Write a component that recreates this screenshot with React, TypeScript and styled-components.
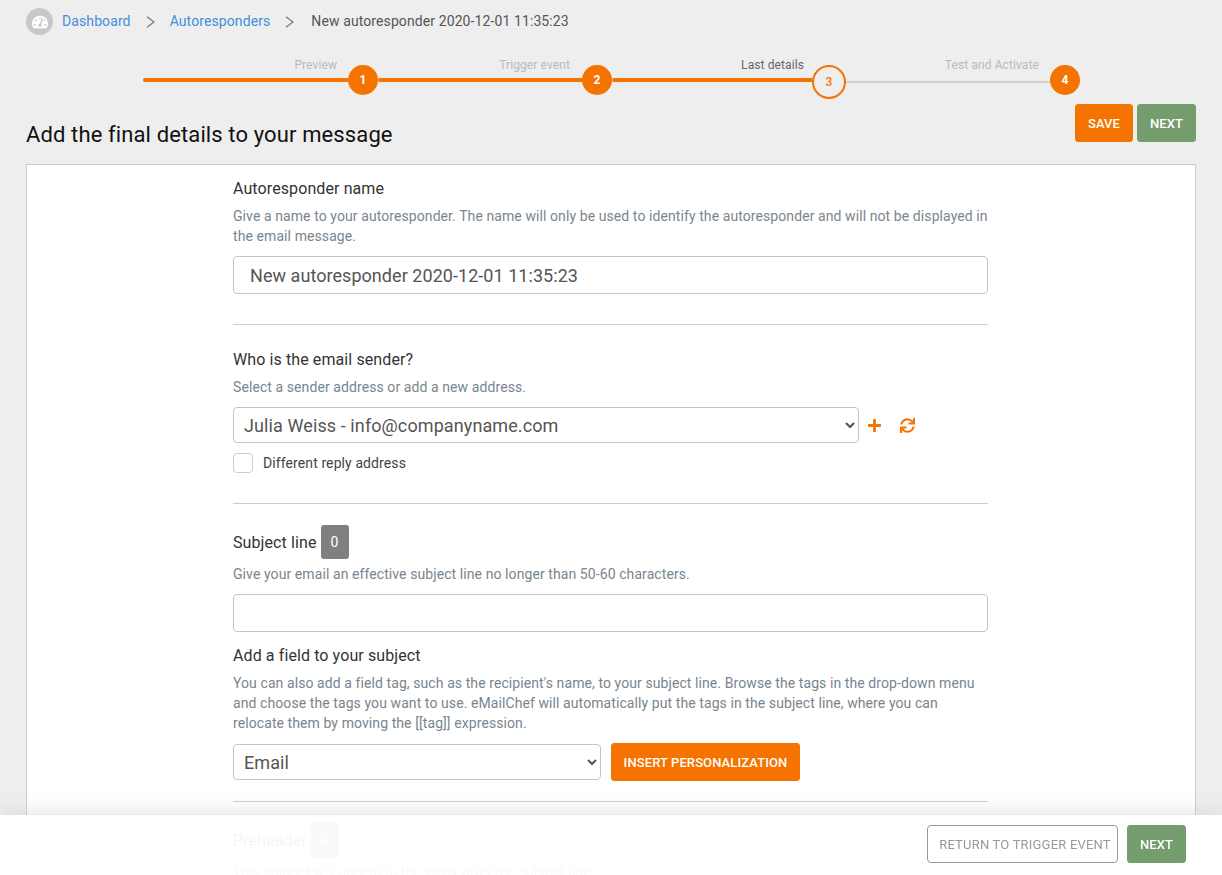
import React from 'react';
import styled, { createGlobalStyle } from 'styled-components';
import { FaPlus, FaSync, FaTachometerAlt } from 'react-icons/fa';

const ORANGE = '#f57300';
const GREEN = '#759c6c';

const GlobalStyle = createGlobalStyle`
  html, body {
    margin: 0;
    height: 100%;
    overflow: hidden;
    background: #eeeeee;
    font-family: Roboto, "Liberation Sans", sans-serif;
    letter-spacing: 0.1px;
  }
  * { box-sizing: border-box; }
`;

const Page = styled.div`
  padding: 8px 26px 0;
`;

const Breadcrumb = styled.nav`
  display: flex;
  align-items: center;
  height: 27px;
  font-size: 14px;
  line-height: 25px;
`;

const HomeIcon = styled.span`
  width: 27px;
  height: 27px;
  border-radius: 50%;
  background: #c8c8c8;
  color: #fff;
  display: flex;
  align-items: center;
  justify-content: center;
  font-size: 16px;
  margin-right: 9px;
`;

const Crumb = styled.a`
  color: #3f8fdc;
  padding-bottom: 1px;
`;

const CrumbCurrent = styled.span`
  color: #555;
  padding-bottom: 1px;
  margin-left: 2px;
`;

const CrumbSep = styled.svg`
  width: 9px;
  height: 12px;
  margin: 0 15px;
  fill: none;
  stroke: #777;
  stroke-width: 1.2;
`;

const Stepper = styled.div`
  display: grid;
  grid-template-columns: 235px repeat(3, 234px);
  margin: 21px 0 0 117px;
  height: 49px;
`;

const Step = styled.div`
  display: flex;
  flex-direction: column;
`;

const StepLabel = styled.div<{ $active?: boolean; $right: number }>`
  height: 14px;
  margin-top: 2px;
  padding-right: ${p => p.$right}px;
  text-align: right;
  font-size: 12px;
  line-height: 14px;
  color: ${p => (p.$active ? '#666' : '#b4bbbf')};
`;

const StepTrack = styled.div`
  display: flex;
  align-items: flex-start;
  margin-top: -7px;
`;

const StepLine = styled.div<{ $done: boolean }>`
  flex: 1;
  height: ${p => (p.$done ? 4 : 2)}px;
  margin-top: ${p => (p.$done ? 13 : 16)}px;
  background: ${p => (p.$done ? ORANGE : '#cfcfcf')};
  border-radius: 2px 0 0 2px;
`;

const StepDot = styled.div<{ $current?: boolean }>`
  width: ${p => (p.$current ? 34 : 30)}px;
  height: ${p => (p.$current ? 34 : 30)}px;
  border-radius: 50%;
  display: flex;
  align-items: center;
  justify-content: center;
  font-size: 12px;
  font-weight: ${p => (p.$current ? 500 : 700)};
  color: ${p => (p.$current ? ORANGE : '#fff')};
  background: ${p => (p.$current ? 'transparent' : ORANGE)};
  border: ${p => (p.$current ? `2px solid ${ORANGE}` : 'none')};
`;

const TitleRow = styled.div`
  display: flex;
  justify-content: space-between;
  align-items: flex-start;
  height: 60px;
  margin-top: -1px;
`;

const Title = styled.h1`
  margin: 15px 0 0;
  font-size: 22px;
  line-height: 31px;
  font-weight: 400;
  letter-spacing: 0.12px;
  color: #111;
`;

const Actions = styled.div`
  display: flex;
  gap: 4px;
`;

const Button = styled.button<{ $color: string; $width: number }>`
  width: ${p => p.$width}px;
  height: 38px;
  background: ${p => p.$color};
  border: 1px solid ${p => p.$color};
  border-radius: 3px;
  color: #fff;
  font-family: inherit;
  font-size: 13px;
  font-weight: 500;
  letter-spacing: inherit;
  text-transform: uppercase;
  padding: 0;
`;

const OutlineButton = styled(Button)`
  background: #fff;
  border-color: #999;
  border-radius: 4px;
  color: #999;
  font-weight: 400;
  letter-spacing: 0.2px;
  padding-left: 5px;
`;

const Card = styled.main`
  background: #fff;
  border: 1px solid #ccc;
  padding: 0 0 0 206px;
  height: 760px;
`;

const Form = styled.div`
  width: 755px;
`;

const Section = styled.section<{ $pad: number }>`
  padding-top: ${p => p.$pad}px;
`;

const Label = styled.div`
  font-size: 16px;
  line-height: 24px;
  color: #333;
`;

const CountedLabel = styled(Label)`
  padding-top: 1px;
`;

const AddFieldLabel = styled(Label)`
  margin-top: 12px;
`;

const Help = styled.p`
  margin: 5px 0 10px;
  font-size: 14px;
  line-height: 20px;
  letter-spacing: 0.085px;
  color: #78858f;
`;

const TextInput = styled.input`
  display: block;
  width: 100%;
  height: 38px;
  border: 1px solid #c4c4c4;
  border-radius: 4px;
  padding: 0 16px;
  font-family: inherit;
  font-size: 18px;
  letter-spacing: 0.05px;
  color: #555;
  background: #fff;
`;

const Select = styled.select<{ $width: number }>`
  width: ${p => p.$width}px;
  height: 36px;
  border: 1px solid #c4c4c4;
  border-radius: 4px;
  padding: 0 6px;
  font-family: inherit;
  font-size: 18px;
  letter-spacing: inherit;
  color: #555;
  background: #fff;
`;

const Divider = styled.hr<{ $top: number }>`
  border: 0;
  border-top: 1px solid #ccc;
  margin: ${p => p.$top}px 0 0;
`;

const SenderRow = styled.div`
  display: flex;
  align-items: center;
`;

const IconAction = styled.span<{ $left: number }>`
  display: flex;
  color: ${ORANGE};
  font-size: 15px;
  margin-left: ${p => p.$left}px;
`;

const CheckRow = styled.label`
  display: flex;
  align-items: center;
  gap: 10px;
  margin-top: 10px;
  font-size: 14px;
  color: #444;
`;

const CheckBox = styled.span`
  width: 20px;
  height: 20px;
  border: 1px solid #ccc;
  border-radius: 4px;
  background: #fff;
`;

const LabelRow = styled.div`
  display: flex;
  align-items: center;
  gap: 4px;
`;

const Counter = styled.span`
  width: 28px;
  height: 34px;
  border-radius: 3px;
  background: #808080;
  color: #fff;
  font-size: 14px;
  display: flex;
  align-items: center;
  justify-content: center;
`;

const FieldRow = styled.div`
  display: flex;
  align-items: center;
  gap: 10px;
`;

const Footer = styled.footer`
  position: fixed;
  left: 0;
  right: 0;
  bottom: 0;
  height: 60px;
  display: flex;
  justify-content: flex-end;
  gap: 9px;
  padding: 10px 36px 0 0;
  background: rgba(255, 255, 255, 0.95);
  box-shadow: 0 -6px 14px rgba(190, 195, 205, 0.35);
`;

const steps = [
  { label: 'Preview', right: 41, done: true },
  { label: 'Trigger event', right: 42, done: true },
  { label: 'Last details', right: 42, done: true, current: true },
  { label: 'Test and Activate', right: 41, done: false },
];

const Chevron: React.FC = () => (
  <CrumbSep viewBox="0 0 9 12">
    <path d="M1 .8 8 6 1 11.2" />
  </CrumbSep>
);

const App: React.FC = () => {
  return (
    <>
      <GlobalStyle />
      <Page>
        <Breadcrumb>
          <HomeIcon>
            <FaTachometerAlt />
          </HomeIcon>
          <Crumb>Dashboard</Crumb>
          <Chevron />
          <Crumb>Autoresponders</Crumb>
          <Chevron />
          <CrumbCurrent>New autoresponder 2020-12-01 11:35:23</CrumbCurrent>
        </Breadcrumb>

        <Stepper>
          {steps.map((step, i) => (
            <Step key={step.label}>
              <StepLabel $right={step.right} $active={step.current}>
                {step.label}
              </StepLabel>
              <StepTrack>
                <StepLine $done={step.done} />
                <StepDot $current={step.current}>{i + 1}</StepDot>
              </StepTrack>
            </Step>
          ))}
        </Stepper>

        <TitleRow>
          <Title>Add the final details to your message</Title>
          <Actions>
            <Button $color={ORANGE} $width={58}>
              Save
            </Button>
            <Button $color={GREEN} $width={59}>
              Next
            </Button>
          </Actions>
        </TitleRow>

        <Card>
          <Form>
            <Section $pad={12}>
              <Label>Autoresponder name</Label>
              <Help>
                Give a name to your autoresponder. The name will only be used to identify the
                autoresponder and will not be displayed in the email message.
              </Help>
              <TextInput defaultValue="New autoresponder 2020-12-01 11:35:23" />
              <Divider $top={30} />
            </Section>

            <Section $pad={23}>
              <Label>Who is the email sender?</Label>
              <Help>Select a sender address or add a new address.</Help>
              <SenderRow>
                <Select $width={626} defaultValue="julia">
                  <option value="julia">Julia Weiss - info@companyname.com</option>
                </Select>
                <IconAction $left={8}>
                  <FaPlus />
                </IconAction>
                <IconAction $left={18}>
                  <FaSync />
                </IconAction>
              </SenderRow>
              <CheckRow>
                <CheckBox />
                Different reply address
              </CheckRow>
              <Divider $top={30} />
            </Section>

            <Section $pad={21}>
              <LabelRow>
                <CountedLabel>Subject line</CountedLabel>
                <Counter>0</Counter>
              </LabelRow>
              <Help>Give your email an effective subject line no longer than 50-60 characters.</Help>
              <TextInput />
              <AddFieldLabel>Add a field to your subject</AddFieldLabel>
              <Help>
                You can also add a field tag, such as the recipient's name, to your subject line.
                Browse the tags in the drop-down menu and choose the tags you want to use. eMailChef
                will automatically put the tags in the subject line, where you can relocate them by
                moving the [[tag]] expression.
              </Help>
              <FieldRow>
                <Select $width={368} defaultValue="email">
                  <option value="email">Email</option>
                </Select>
                <Button $color={ORANGE} $width={189}>
                  Insert personalization
                </Button>
              </FieldRow>
              <Divider $top={20} />
            </Section>

            <Section $pad={21}>
              <LabelRow>
                <CountedLabel>Preheader</CountedLabel>
                <Counter>0</Counter>
              </LabelRow>
              <Help>This snippet will appear in the inbox after the subject line.</Help>
            </Section>
          </Form>
        </Card>
      </Page>

      <Footer>
        <OutlineButton $color="#fff" $width={191}>
          Return to trigger event
        </OutlineButton>
        <Button $color={GREEN} $width={59}>
          Next
        </Button>
      </Footer>
    </>
  );
};

export default App;
